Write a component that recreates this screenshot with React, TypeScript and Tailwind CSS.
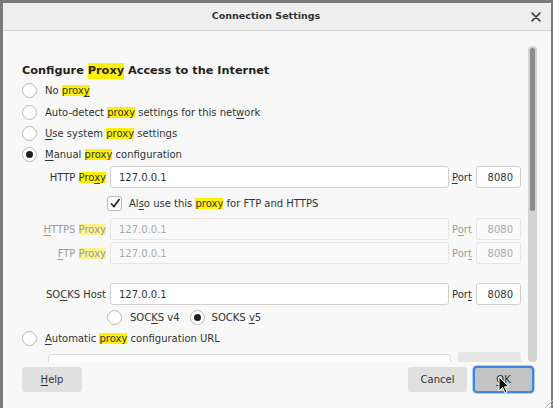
import React from "react";

const font = { fontFamily: '"DejaVu Sans", "Liberation Sans", sans-serif' };

function H({ children, dis }: { children: React.ReactNode; dis?: boolean }) {
  return <span className={dis ? "bg-[#fbf28e]" : "bg-[#fff000]"}>{children}</span>;
}

function U({ children }: { children: React.ReactNode }) {
  return <span className="underline underline-offset-[2px] decoration-1">{children}</span>;
}

function Radio({ checked }: { checked?: boolean }) {
  return (
    <div className="w-[15px] h-[15px] rounded-full border border-[#bdb8b3] bg-white flex items-center justify-center shrink-0">
      {checked && <div className="w-[7px] h-[7px] rounded-full bg-[#1e1e1e]" />}
    </div>
  );
}

function Field({
  label,
  value,
  port,
  disabled,
}: {
  label: React.ReactNode;
  value: string;
  port: React.ReactNode;
  disabled?: boolean;
}) {
  return (
    <div className="flex items-center h-[22px]">
      <div className={`w-[84px] text-right ${disabled ? "text-[#9a9c9d]" : ""}`}>{label}</div>
      <div
        className={`ml-[4px] w-[339px] h-[22px] rounded-[3px] border flex items-center pl-[8px] ${
          disabled ? "border-[#e4e4e4] bg-[#fafafa] text-[#a9aaab]" : "border-[#d2d0ce] bg-white"
        }`}
      >
        {value}
      </div>
      <div className={`ml-[3px] w-[24px] ${disabled ? "text-[#9a9c9d]" : ""}`}>{port}</div>
      <div
        className={`w-[45px] h-[22px] rounded-[3px] border flex items-center justify-end pr-[7px] ${
          disabled ? "border-[#e4e4e4] bg-[#fafafa] text-[#a9aaab]" : "border-[#d2d0ce] bg-white"
        }`}
      >
        8080
      </div>
    </div>
  );
}

export default function App() {
  return (
    <div className="w-[553px] h-[408px] bg-[#7a7a7a] overflow-hidden relative" style={font}>
      <div className="absolute left-[3px] top-[3px] w-[548px] h-[405px] bg-[#f8f8f8] flex flex-col text-[10px] text-[#2e3436]">
        {/* title bar */}
        <div className="h-[28px] shrink-0 bg-[#efefef] border-b border-[#d5d5d5] flex items-center justify-center pr-[22px] relative">
          <span className="font-bold text-[9.5px] text-[#2e3436]">Connection Settings</span>
          <svg
            className="absolute left-[528px] top-[9px]"
            width="10"
            height="10"
            viewBox="0 0 10 10"
          >
            <path d="M1 1 L9 9 M9 1 L1 9" stroke="#2e3436" strokeWidth="1.6" strokeLinecap="round" />
          </svg>
        </div>

        {/* scroll region */}
        <div className="relative flex-1 overflow-hidden pl-[19px] pt-[31px]">
          <div className="h-[18px] flex items-center font-bold text-[11.3px] text-[#232323]">
            Configure&nbsp;<H>Proxy</H>&nbsp;Access to the Internet
          </div>
          <div className="h-[21px] flex items-center gap-[8px]">
            <Radio />
            <span>
              No <H>
                prox<U>y</U>
              </H>
            </span>
          </div>
          <div className="h-[22px] flex items-center gap-[8px]">
            <Radio />
            <span>
              Auto-detect <H>proxy</H> settings for this net<U>w</U>ork
            </span>
          </div>
          <div className="h-[21px] flex items-center gap-[8px]">
            <Radio />
            <span>
              <U>U</U>se system <H>proxy</H> settings
            </span>
          </div>
          <div className="h-[21px] flex items-center gap-[8px]">
            <Radio checked />
            <span>
              <U>M</U>anual <H>proxy</H> configuration
            </span>
          </div>

          <div className="mt-[1px]">
            <Field
              label={
                <>
                  HTTP <H>
                    Pro<U>x</U>y
                  </H>
                </>
              }
              value="127.0.0.1"
              port={
                <>
                  <U>P</U>ort
                </>
              }
            />
          </div>

          <div className="mt-[4px] h-[22px] flex items-center ml-[85px] gap-[7px]">
            <div className="w-[15px] h-[15px] rounded-[3px] border border-[#bdb8b3] bg-white flex items-center justify-center">
              <svg width="12" height="12" viewBox="0 0 12 12">
                <path d="M2 6.5 L5 9.5 L10.5 2" stroke="#1e1e1e" strokeWidth="1.7" fill="none" />
              </svg>
            </div>
            <span>
              Al<U>s</U>o use this <H>proxy</H> for FTP and HTTPS
            </span>
          </div>

          <div className="mt-[4px]">
            <Field
              disabled
              label={
                <>
                  <U>H</U>TTPS <H dis>Proxy</H>
                </>
              }
              value="127.0.0.1"
              port={
                <>
                  P<U>o</U>rt
                </>
              }
            />
          </div>
          <div className="mt-[2px]">
            <Field
              disabled
              label={
                <>
                  <U>F</U>TP <H dis>Proxy</H>
                </>
              }
              value="127.0.0.1"
              port={
                <>
                  Por<U>t</U>
                </>
              }
            />
          </div>

          <div className="mt-[19px]">
            <Field
              label={
                <>
                  SO<U>C</U>KS Host
                </>
              }
              value="127.0.0.1"
              port={
                <>
                  Por<U>t</U>
                </>
              }
            />
          </div>

          <div className="mt-[2px] h-[20px] flex items-center ml-[85px]">
            <Radio />
            <span className="ml-[8px]">
              SOC<U>K</U>S v4
            </span>
            <div className="ml-[10px]">
              <Radio checked />
            </div>
            <span className="ml-[7px]">
              SOCKS <U>v</U>5
            </span>
          </div>

          <div className="mt-[1px] h-[20px] flex items-center gap-[8px]">
            <Radio />
            <span>
              <U>A</U>utomatic <H>proxy</H> configuration URL
            </span>
          </div>

          <div className="mt-[4px] flex items-start ml-[26px]">
            <div className="mt-[2px] w-[403px] h-[24px] rounded-[3px] border border-[#dcdcdc] bg-white" />
            <div className="ml-[7px] w-[63px] h-[26px] rounded-[3px] bg-[#e6e6e6]" />
          </div>

          {/* overlay scrollbar */}
          <div className="absolute left-[525px] top-[15px] bottom-0 w-[9px] bg-[#d3d3d3] rounded-[4px]">
            <div className="absolute left-[2px] top-[2px] w-[5px] h-[163px] bg-[#8a8a8a] rounded-full" />
          </div>
        </div>

        {/* footer */}
        <div className="h-[46px] shrink-0 flex items-start pt-[5px] pl-[19px] pr-[17px] bg-[#f8f8f8]">
          <div className="w-[60px] h-[25px] rounded-[3px] bg-[#e0e0e0] flex items-center justify-center">
            <span>
              <U>H</U>elp
            </span>
          </div>
          <div className="flex-1" />
          <div className="w-[59px] h-[25px] rounded-[3px] bg-[#e0e0e0] flex items-center justify-center">
            Cancel
          </div>
          <div className="ml-[6px] -mt-[1px] w-[61px] h-[27px] rounded-[4px] border-2 border-[#3d87e0] bg-[#c3c3c3] shadow-[0_0_0_1px_#a9cdf5] flex items-center justify-center">
            <span>
              <U>O</U>K
            </span>
          </div>
        </div>
      </div>

      {/* resize grip */}
      <svg className="absolute left-[543px] top-[398px]" width="10" height="10" viewBox="0 0 10 10">
        <path d="M10 2 L2 10 M10 6 L6 10" stroke="#b5b5b5" strokeWidth="1" />
      </svg>

      {/* mouse cursor */}
      <svg className="absolute left-[498px] top-[376px]" width="12" height="19" viewBox="0 0 12 19">
        <path
          d="M1 1 L1 15 L4.5 11.5 L7 17 L9 16 L6.5 10.8 L11 10.8 Z"
          fill="#111"
          stroke="#fff"
          strokeWidth="1"
          strokeLinejoin="round"
        />
      </svg>
    </div>
  );
}
